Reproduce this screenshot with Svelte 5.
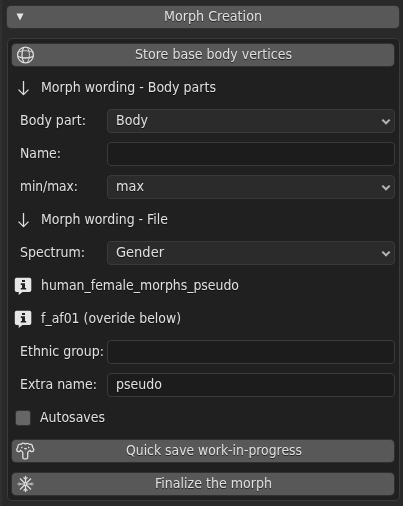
<script>
  const rows = [
    { type: 'button', icon: 'globe', text: 'Store base body vertices', w: 157 },
    { type: 'label', icon: 'arrow', text: 'Morph wording - Body parts', w: 175 },
    { type: 'select', label: 'Body part:', lw: 66, text: 'Body', w: 32 },
    { type: 'input', label: 'Name:', lw: 41, text: '' },
    { type: 'select', label: 'min/max:', lw: 58, text: 'max', w: 28 },
    { type: 'label', icon: 'arrow', text: 'Morph wording - File', w: 127 },
    { type: 'select', label: 'Spectrum:', lw: 65, text: 'Gender', w: 48 },
    { type: 'label', icon: 'info', text: 'human_female_morphs_pseudo', w: 198 },
    { type: 'label', icon: 'info', text: 'f_af01 (overide below)', w: 140 },
    { type: 'input', label: 'Ethnic group:', lw: 84, text: '' },
    { type: 'input', label: 'Extra name:', lw: 77, text: 'pseudo', w: 46 },
    { type: 'check', text: 'Autosaves', w: 65 },
    { type: 'button', icon: 'tree', text: 'Quick save work-in-progress', w: 176 },
    { type: 'button', icon: 'snow', text: 'Finalize the morph', w: 117 }
  ];
</script>

{#snippet icon(name)}
  <svg class="icon" width="20" height="22" viewBox="0 0 20 22">
    {#if name === 'globe'}
      <g class="line">
        <circle cx="10.5" cy="11" r="7.9" />
        <path d="M8.6 3.3C6.5 8 6.7 14.5 9 18.8" />
        <path class="thin" d="M12.3 3.3C15.2 8 15 15 12 18.7M3.2 8.3C7 6.2 13 6.2 17.8 8.2" />
        <path d="M2.6 12.2C7 14.6 14 14.6 18.3 12.2" />
      </g>
    {:else if name === 'arrow'}
      <path class="line" d="M8.5 4V17.5M3.5 12.6L8.5 17.6L13.5 12.6" />
    {:else if name === 'info'}
      <path class="solid" d="M1.5 2.8H14.5Q16.3 2.8 16.3 4.5V15.2Q16.3 17 14.5 17H7.5L3.7 20V17H1.5Q-.2 17 -.2 15.2V4.5Q-.2 2.8 1.5 2.8Z" />
      <path class="mark" d="M7 5H10V7.1H7ZM5.8 8.3H10V13H11.2V14.6H5.8V13H7V9.9H5.8Z" />
    {:else if name === 'tree'}
      <path class="line" d="M7.8 12.6C7.4 11.4 6.4 10.8 5.3 10.2C5.1 12.3 1.9 12.2 1.7 9.6C1.7 8.5 2.9 8.2 2.8 6.8C2.7 4.6 4.6 3.8 6.2 4.4C7.6 2.8 9.3 3 10.3 4C11.4 3 13.2 3 14.4 4.4C16 3.8 17.6 4.8 17.5 6.8C17.4 8.2 18.8 8.5 18.8 9.6C18.6 12.2 15.4 12.3 15.2 10.2C14.1 10.8 13 11.4 12.7 12.6V17.2Q12.7 18.8 11.2 18.8H9.3Q7.8 18.8 7.8 17.2Z" />
      <path class="line" d="M6.3 7.9L7.4 7M9.2 8.2L10.5 9L11.8 8.2M13.2 7L14.2 7.9" />
    {:else if name === 'snow'}
      <path class="line snow" d="M10.5 3V19M2.5 11H18.5M5 5.5L16 16.5M16 5.5L5 16.5M8.5 4.3L10.5 6.3L12.5 4.3M8.5 17.7L10.5 15.7L12.5 17.7" />
      <path class="line faint" d="M3.8 9.3L5.5 11L3.8 12.7M17.2 9.3L15.5 11L17.2 12.7" />
      <path class="core" d="M10.5 10L11.5 11L10.5 12L9.5 11Z" />
    {/if}
  </svg>
{/snippet}

{#snippet copy(text, w)}
  <svg class="copy" width={w} height="22"><text x="0" y="15" textLength={w} lengthAdjust="spacingAndGlyphs">{text}</text></svg>
{/snippet}

<main>
  <header class="button">
    <svg class="triangle" width="8" height="8" viewBox="0 0 8 8"><path d="M.5 .5H7.5L4 7.5Z" /></svg>
    {@render copy('Morph Creation', 98)}
  </header>
  <section>
    {#each rows as row}
      {#if row.type === 'button'}
        <div class="button">
          {@render icon(row.icon)}
          {@render copy(row.text, row.w)}
        </div>
      {:else if row.type === 'label'}
        <div class="row note">
          {@render icon(row.icon)}
          {@render copy(row.text, row.w)}
        </div>
      {:else if row.type === 'check'}
        <div class="row check">
          <i></i>
          {@render copy(row.text, row.w)}
        </div>
      {:else}
        <div class="row prop">
          <div class="name">{@render copy(row.label, row.lw)}</div>
          <div class="field {row.type}">
            {#if row.text}{@render copy(row.text, row.w)}{/if}
            {#if row.type === 'select'}
              <svg class="chevron" width="10" height="8" viewBox="0 0 10 8"><path d="M1.3 1.6L5 5.3L8.7 1.6" /></svg>
            {/if}
          </div>
        </div>
      {/if}
    {/each}
  </section>
</main>

<style>
  :global(body) { margin: 0; background: #292929; }
  main {
    box-sizing: border-box;
    width: 403px;
    height: 506px;
    padding: 6px 3px 0 5px;
    background: #292929;
    border-left: 2px solid #303030;
    font: 13.3px "DejaVu Sans", sans-serif;
    overflow: hidden;
  }
  svg { display: block; flex: none; }
  .copy { overflow: visible; }
  text { fill: #e0e0e0; filter: drop-shadow(0 1px 0.5px rgba(0, 0, 0, 0.55)); }
  .button {
    display: grid;
    grid-template-columns: 20px 1fr;
    height: 22px;
    padding: 0 2px 0 3px;
    border-radius: 4px;
    background: #585858;
    box-shadow: 0 0 0 1px #303030;
    align-items: center;
  }
  .button .copy { justify-self: center; }
  header.button { margin-right: 1px; padding-right: 4px; }
  .triangle { margin: -1px 0 0 6px; }
  .triangle path { fill: #e6e6e6; }
  section {
    box-sizing: border-box;
    height: 463px;
    margin-top: 10px;
    padding: 5px 5px 0 4px;
    border: 1px solid #3b3b3b;
    border-radius: 5px;
    background: #202020;
    display: flex;
    flex-direction: column;
    gap: 11px;
  }
  .row { display: flex; height: 22px; align-items: center; }
  .note { padding-left: 3px; }
  .note .copy { margin-left: 6px; }
  .check { padding-left: 4px; }
  .check i {
    width: 14px;
    height: 14px;
    margin-right: 10px;
    border-radius: 2px;
    background: #666;
    box-shadow: 0 0 0 1px #333;
  }
  .name { width: 87px; padding-left: 8px; }
  .field {
    box-sizing: border-box;
    flex: 1;
    height: 24px;
    margin-right: -1px;
    padding: 0 3px 0 8px;
    border: 1px solid #3a3a3a;
    border-radius: 4px;
    display: flex;
    align-items: center;
  }
  .select { background: #2b2b2b; }
  .input { background: #1c1c1c; }
  .chevron { margin: 2px 0 0 auto; }
  .chevron path { fill: none; stroke: #b5b5b5; stroke-width: 2; }
  .icon { overflow: visible; }
  .line { fill: none; stroke: #dedede; stroke-width: 1.3; stroke-linejoin: round; }
  .thin { stroke-width: 0.9; }
  .snow { stroke-width: 1.2; }
  .faint { stroke-width: 0.7; }
  .core { fill: #777; }
  .solid { fill: #e6e6e6; }
  .mark { fill: #222; }
</style>
